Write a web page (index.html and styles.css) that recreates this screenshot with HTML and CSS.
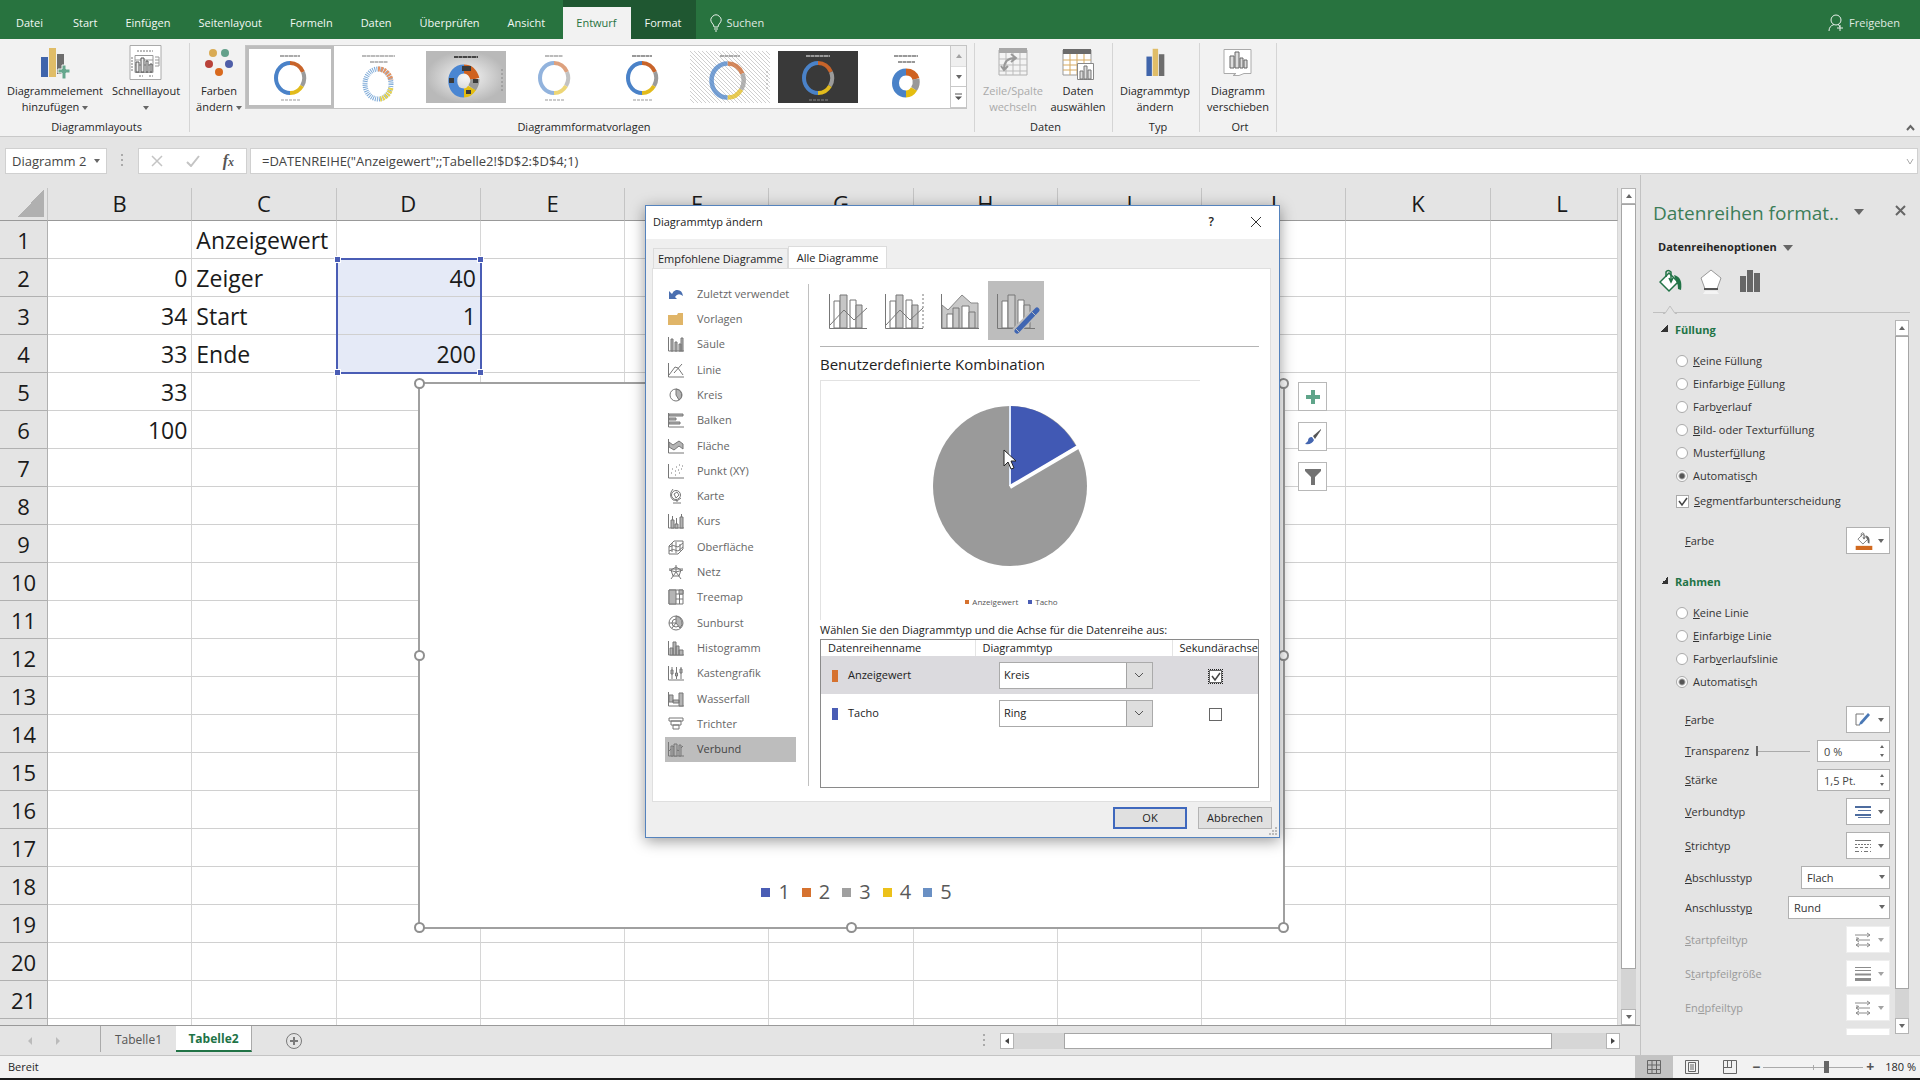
FILE: index.html
```html
<!DOCTYPE html>
<html lang="de">
<head>
<meta charset="utf-8">
<title>Diagrammtyp ändern</title>
<link rel="stylesheet" href="styles.css">
</head>
<body>
<svg class="defs" aria-hidden="true">
  <symbol id="ring" viewBox="0 0 36 36">
    <g fill="none" stroke-width="4">
      <path d="M18 3A14 15 0 0 1 31 12" stroke="#c8642a"/>
      <path d="M31 12A14 15 0 0 1 30 26" stroke="#9b9b9b"/>
      <path d="M30 26A14 15 0 0 1 18 33" stroke="#e2bb1c"/>
      <path d="M18 33A14 15 0 0 1 18 3" stroke="#4a82c8"/>
    </g>
  </symbol>
  <symbol id="bars3" viewBox="0 0 24 36">
    <path d="M1 11h7v25H1z" fill="#4065ab"/><path d="M9 1h7v35H9z" fill="#e0bd68"/><path d="M17 8h7v28h-7z" fill="#6d6d6d"/>
  </symbol>
  <symbol id="bucket" viewBox="0 0 24 24">
    <path d="M10 4l9 9-9 9-9-9z" fill="#fff" stroke="currentColor" stroke-width="1.500"/>
    <path d="M7 8V3q2-3 5 0v9M10 9l2 4 2-4" fill="none" stroke="currentColor" stroke-width="1.500"/>
    <path d="M15 6q9 2 7 15l-3-1q0-5-2-8z" fill="currentColor"/>
  </symbol>
  <symbol id="arrows" viewBox="0 0 16 16">
    <path d="M0 3h15M12 1l3 2-3 2M1 8h14M4 6L1 8l3 2M1 13h14M4 11l-3 2 3 2M12 11l3 2-3 2M2 8V5" fill="none" stroke="#8c8c8c"/>
  </symbol>
  <symbol id="combo" viewBox="0 0 40 36">
    <path d="M6 8h6v27H6zM22 7h6v28h-6z" fill="#fff" stroke="#777"/>
    <path d="M12 2h7v33h-7zM28 12h6v23h-6z" fill="#c6c6c6" stroke="#777"/>
    <path d="M1.500 1v34.500H39" fill="none" stroke="#777"/>
  </symbol>
</svg>

<header class="tabs">
  <nav class="tab-list">
    <button>Datei</button><button>Start</button><button>Einfügen</button><button>Seitenlayout</button><button>Formeln</button><button>Daten</button><button>Überprüfen</button><button>Ansicht</button>
    <div class="context"><button class="active">Entwurf</button><button>Format</button></div>
    <button class="search"><svg width="12" height="18" viewBox="0 0 12 18" fill="none" stroke="#fff"><path d="M4 13Q4 11 2 9A5 5 0 1 1 10 9Q8 11 8 13zM4 15h4M5 17h2"/></svg>Suchen</button>
  </nav>
  <button class="share"><svg width="16" height="18" viewBox="0 0 16 18" fill="none" stroke="#fff"><circle cx="8" cy="6" r="5"/><path d="M1 17Q1 12 6 10.500M10 10l2 3M9 14h6M12 11v6"/></svg>Freigeben</button>
</header>

<section class="ribbon">
  <div class="group g-layout">
    <div class="tools">
      <button class="tool w104"><svg width="30" height="36" viewBox="0 0 30 36"><path d="M1 12h7v20H1z" fill="#4065ab"/><path d="M9 3h7v29H9z" fill="#e0bd68"/><path d="M17 9h7v20h-7z" fill="#6d6d6d"/><path d="M18 24h4v-4h4v4h4v4h-4v6h-4v-6h-4z" fill="#66a78d" stroke="#f2f2f2"/></svg><span>Diagrammelement<br>hinzufügen <i class="caret"></i></span></button>
      <button class="tool w78"><svg width="34" height="36" viewBox="0 0 34 36"><path d="M1 .5h31v34H1z" fill="#fff" stroke="#aaa"/><path d="M8 6h16M10 31h4M20 31h4M3 12v14" stroke="#777" stroke-dasharray="2 1"/><path d="M6 10.500h18v17H6zM26 12h4v9h-4M26 15h4M26 18h4M6 15h18M6 20h18" fill="none" stroke="#999"/><path d="M7 17h3v10H7zM12 13h3v14h-3zM17 16h2v11h-2zM21 19h2v8h-2z" fill="#eee" stroke="#555"/></svg><span>Schnelllayout<br><i class="caret"></i></span></button>
    </div>
    <p>Diagrammlayouts</p>
  </div>
  <div class="group g-styles">
    <div class="tools">
      <button class="tool w52"><svg width="30" height="36" viewBox="0 0 30 36"><circle cx="9" cy="8" r="4" fill="#d9ab54"/><circle cx="21" cy="8" r="4" fill="#64a18b"/><circle cx="5" cy="19" r="4" fill="#b9423a"/><circle cx="25" cy="19" r="4" fill="#4f5ea8"/><circle cx="15" cy="27" r="4" fill="#d96a1e"/></svg><span>Farben<br>ändern <i class="caret"></i></span></button>
      <div class="gallery">
        <button class="style selected" aria-label="Formatvorlage 1"><svg viewBox="0 0 80 52"><path d="M30 5h20" stroke="#aaa" stroke-width="2" stroke-dasharray="4 .5"/><use href="#ring" x="22" y="9" width="36" height="36"/><path d="M31 49h20" stroke="#ccc" stroke-width="2" stroke-dasharray="3 1"/></svg></button>
        <button class="style" aria-label="Formatvorlage 2"><svg viewBox="0 0 80 52"><path d="M24 5h33M32 11h18" stroke="#bbb" stroke-width="2" stroke-dasharray="4 .5"/><ellipse cx="40" cy="33" rx="13" ry="15" fill="none" stroke="#7fabd8" stroke-width="5" stroke-dasharray="1 1"/><path d="M40 18a13 15 0 0 1 13 11" fill="none" stroke="#e59361" stroke-width="5" stroke-dasharray="2 1"/><path d="M53 37a13 15 0 0 1-11 11" fill="none" stroke="#e8d34d" stroke-width="5" stroke-dasharray="2 1"/></svg></button>
        <button class="style" aria-label="Formatvorlage 3"><svg viewBox="0 0 80 52"><defs><radialGradient id="gr"><stop offset="0" stop-color="#f6f6f6"/><stop offset="1" stop-color="#b9b9b9"/></radialGradient></defs><path d="M0 0h80v52H0z" fill="url(#gr)"/><path d="M28 6h24" stroke="#444" stroke-width="2" stroke-dasharray="4 .5"/><g fill="none" stroke-width="9"><path d="M38 18q8 0 11 10" stroke="#cf6220"/><path d="M49 28q0 5-3 9" stroke="#999"/><path d="M46 37q-3 5-8 5" stroke="#e4bd10"/><path d="M38 42C23 42 23 18 38 18" stroke="#4a86d2"/></g><path d="M23 27h5v5h-5zM36 15h9v5h-9zM47 28h5v4h-5zM40 39h5v4h-5z" fill="#3b3b3b"/><path d="M76 18v22" stroke="#888" stroke-dasharray="2 2"/></svg></button>
        <button class="style" aria-label="Formatvorlage 4"><svg viewBox="0 0 80 52"><path d="M31 5h18" stroke="#bbb" stroke-width="2" stroke-dasharray="4 .5"/><use href="#ring" x="22" y="9" width="36" height="36" opacity=".6"/><path d="M31 49h20" stroke="#ccc" stroke-width="2" stroke-dasharray="3 1"/></svg></button>
        <button class="style" aria-label="Formatvorlage 5"><svg viewBox="0 0 80 52"><path d="M30 5h20" stroke="#999" stroke-width="2" stroke-dasharray="4 .5"/><use href="#ring" x="22" y="9" width="36" height="36"/><path d="M31 49h20" stroke="#ccc" stroke-width="2" stroke-dasharray="3 1"/></svg></button>
        <button class="style" aria-label="Formatvorlage 6"><svg viewBox="0 0 80 52"><defs><pattern id="hatch" width="4" height="4" patternUnits="userSpaceOnUse"><path d="M0 0l4 4" stroke="#cfcfcf"/></pattern></defs><path d="M0 0h80v52H0z" fill="url(#hatch)"/><path d="M30 5h20" stroke="#aaa" stroke-width="2" stroke-dasharray="4 .5"/><use href="#ring" x="17" y="9" width="41" height="41" opacity=".75"/><path d="M77 20v20" stroke="#aaa" stroke-dasharray="2 2"/></svg></button>
        <button class="style" aria-label="Formatvorlage 7"><svg viewBox="0 0 80 52"><path d="M0 0h80v52H0z" fill="#393939"/><path d="M28 5h24" stroke="#999" stroke-width="2" stroke-dasharray="4 .5"/><use href="#ring" x="22" y="9" width="36" height="36"/><path d="M31 49h20" stroke="#888" stroke-dasharray="3 1"/></svg></button>
        <button class="style" aria-label="Formatvorlage 8"><svg viewBox="0 0 80 52"><path d="M28 5h24M32 11h17" stroke="#999" stroke-width="2" stroke-dasharray="4 .5"/><g fill="none" stroke-width="7"><path d="M40 21q8 0 10 7" stroke="#cf6220"/><path d="M50 28q1 6-2 10" stroke="#999"/><path d="M48 38q-3 5-8 5" stroke="#e4bd10"/><path d="M40 43C26 43 26 21 40 21" stroke="#4a82c8"/></g></svg></button>
        <div class="gallery-nav"><button class="off" aria-label="Nach oben"><i class="up"></i></button><button aria-label="Nach unten"><i class="caret"></i></button><button aria-label="Mehr"><svg width="7" height="8" viewBox="0 0 7 8"><path d="M0 1h7" stroke="#555"/><path d="M0 3.500h7L3.500 7z" fill="#555"/></svg></button></div>
      </div>
    </div>
    <p>Diagrammformatvorlagen</p>
  </div>
  <div class="group g-data">
    <div class="tools">
      <button class="tool w68" disabled><svg width="30" height="36" viewBox="0 0 30 36"><path d="M1 5h28v25H1z" fill="#f4f4f4" stroke="#b0b0b0"/><path d="M1 3h28v5H1z" fill="#a8a8a8"/><path d="M1 14h28M1 20h28M1 26h28M8 8v22M15 8v22M22 8v22" stroke="#bbb"/><path d="M6 24Q6 13 17 13M13 9l5 4-5 4M3 21l3 4 4-4" fill="none" stroke="#999" stroke-width="2"/></svg><span>Zeile/Spalte<br>wechseln</span></button>
      <button class="tool w60"><svg width="32" height="36" viewBox="0 0 32 36"><path d="M1 5h28v25H1z" fill="#fff" stroke="#999"/><path d="M1 4h28v5H1z" fill="#6b6b6b"/><path d="M1 15h28M1 20h28M1 25h28M8 9v21M15 9v21M22 9v21" stroke="#d6a95e"/><path d="M15.500 18.500h16v16h-16z" fill="#fff" stroke="#888"/><path d="M18 26h3v8h-3zM22 21h3v13h-3zM26 25h3v9h-3z" fill="#ddd" stroke="#777"/></svg><span>Daten<br>auswählen</span></button>
    </div>
    <p>Daten</p>
  </div>
  <div class="group g-type">
    <div class="tools"><button class="tool w78"><svg width="24" height="36" viewBox="0 0 24 36"><use href="#bars3" width="24" height="28" y="3"/></svg><span>Diagrammtyp<br>ändern</span></button></div>
    <p>Typ</p>
  </div>
  <div class="group g-place">
    <div class="tools"><button class="tool w68"><svg width="30" height="36" viewBox="0 0 30 36"><path d="M1 4.500h27v24H21l-5 2h-6l3-2H1z" fill="#fff" stroke="#aaa"/><path d="M7 11h4v12H7zM12 7h4v16h-4zM17 13h3v10h-3zM21 15h3v8h-3z" fill="#ddd" stroke="#666"/></svg><span>Diagramm<br>verschieben</span></button></div>
    <p>Ort</p>
  </div>
  <button class="collapse" aria-label="Menüband reduzieren"><svg width="9" height="7" viewBox="0 0 9 7"><path d="M1 6l3.500-4L8 6" fill="none" stroke="#666" stroke-width="2"/></svg></button>
</section>

<div class="formula-bar">
  <div class="name-box"><input value="Diagramm 2" aria-label="Namenfeld"><i class="caret"></i></div>
  <span class="dots"></span>
  <div class="fx-box">
    <svg width="12" height="12" viewBox="0 0 12 12"><path d="M1 1l10 10M11 1L1 11" stroke="#c4c4c4" stroke-width="1.500"/></svg>
    <svg width="14" height="12" viewBox="0 0 14 12"><path d="M1 7l4 4 8-10" fill="none" stroke="#c4c4c4" stroke-width="2"/></svg>
    <button class="fx">f<small>x</small></button>
  </div>
  <div class="formula"><input value="=DATENREIHE(&quot;Anzeigewert&quot;;;Tabelle2!$D$2:$D$4;1)" aria-label="Formel"><svg width="8" height="7" viewBox="0 0 8 7"><path d="M1 1l3 5 3-5" fill="none" stroke="#aaa"/></svg></div>
</div>

<main class="workspace">
  <section class="book">
    <div class="sheet-area">
      <div class="sheet">
        <table class="grid">
          <colgroup><col class="c-row"><col span="10" class="c-col"><col class="c-last"></colgroup>
          <thead><tr><th><i class="all"></i></th><th>B</th><th>C</th><th>D</th><th>E</th><th>F</th><th>G</th><th>H</th><th>I</th><th>J</th><th>K</th><th>L</th></tr></thead>
          <tbody>
          <tr><th>1 <td> <td>Anzeigewert <td> <td><td><td><td> <td><td><td><td>
          <tr><th>2 <td class="n">0 <td>Zeiger <td class="n s">40 <td><td><td><td> <td><td><td><td>
          <tr><th>3 <td class="n">34 <td>Start <td class="n s">1 <td><td><td><td> <td><td><td><td>
          <tr><th>4 <td class="n">33 <td>Ende <td class="n s">200 <td><td><td><td> <td><td><td><td>
          <tr><th>5 <td class="n">33 <td><td> <td><td><td><td> <td><td><td><td>
          <tr><th>6 <td class="n">100 <td><td> <td><td><td><td> <td><td><td><td>
          <tr><th>7 <td><td><td> <td><td><td><td> <td><td><td><td>
          <tr><th>8 <td><td><td> <td><td><td><td> <td><td><td><td>
          <tr><th>9 <td><td><td> <td><td><td><td> <td><td><td><td>
          <tr><th>10 <td><td><td> <td><td><td><td> <td><td><td><td>
          <tr><th>11 <td><td><td> <td><td><td><td> <td><td><td><td>
          <tr><th>12 <td><td><td> <td><td><td><td> <td><td><td><td>
          <tr><th>13 <td><td><td> <td><td><td><td> <td><td><td><td>
          <tr><th>14 <td><td><td> <td><td><td><td> <td><td><td><td>
          <tr><th>15 <td><td><td> <td><td><td><td> <td><td><td><td>
          <tr><th>16 <td><td><td> <td><td><td><td> <td><td><td><td>
          <tr><th>17 <td><td><td> <td><td><td><td> <td><td><td><td>
          <tr><th>18 <td><td><td> <td><td><td><td> <td><td><td><td>
          <tr><th>19 <td><td><td> <td><td><td><td> <td><td><td><td>
          <tr><th>20 <td><td><td> <td><td><td><td> <td><td><td><td>
          <tr><th>21 <td><td><td> <td><td><td><td> <td><td><td><td>
          <tr><th> <td><td><td> <td><td><td><td> <td><td><td><td>
          </tbody>
        </table>
        <div class="range"><i></i><i></i><i></i><i></i></div>
        <div class="chart">
          <i class="h tl"></i><i class="h tr"></i><i class="h ml"></i><i class="h mr"></i><i class="h bl"></i><i class="h bm"></i><i class="h br"></i>
          <ul class="legend"><li class="k1">1</li><li class="k2">2</li><li class="k3">3</li><li class="k4">4</li><li class="k5">5</li></ul>
          <div class="chart-tools">
            <button aria-label="Diagrammelemente"><svg width="16" height="16" viewBox="0 0 16 16"><path d="M6 1h4v5h5v4h-5v5H6v-5H1V6h5z" fill="#5fa58a"/></svg></button>
            <button aria-label="Diagrammformatvorlagen"><svg width="18" height="18" viewBox="0 0 18 18"><path d="M17 1L9 8l2 3 6-9z" fill="#555"/><path d="M8 9q-4 0-4 4l-3 3q7 1 9-4z" fill="#4466b0"/></svg></button>
            <button aria-label="Diagrammfilter"><svg width="18" height="18" viewBox="0 0 18 18"><path d="M1 1h16v2l-6 6v8H7V9L1 3z" fill="#737373"/></svg></button>
          </div>
        </div>
      </div>
      <div class="vscroll"><button aria-label="Nach oben"><i class="up"></i></button><span class="thumb"></span><span class="track"></span><button aria-label="Nach unten"><i class="caret"></i></button></div>
    </div>
    <div class="sheet-tabs">
      <span class="prev"></span><span class="next"></span>
      <button class="stab first">Tabelle1</button><button class="stab current">Tabelle2</button>
      <button class="add" aria-label="Neues Blatt"><svg width="18" height="18" viewBox="0 0 18 18" fill="none" stroke="#7a7a7a"><circle cx="9" cy="9" r="7.500"/><path d="M9 5v8M5 9h8" stroke-width="2"/></svg></button>
      <span class="dots"></span>
      <div class="hscroll"><button aria-label="Nach links"><i class="left"></i></button><span class="t1"></span><span class="thumb"></span><span class="t2"></span><button aria-label="Nach rechts"><i class="right"></i></button></div>
    </div>
  </section>

  <aside class="pane">
    <div class="pane-head"><h2>Datenreihen format..</h2><i class="caret big"></i><button aria-label="Schließen"><svg width="11" height="11" viewBox="0 0 11 11"><path d="M1 1l9 9M10 1l-9 9" stroke="#666" stroke-width="2"/></svg></button></div>
    <button class="pane-sub">Datenreihenoptionen <i class="caret big"></i></button>
    <div class="pane-icons">
      <svg class="green" width="24" height="24"><use href="#bucket"/></svg>
      <svg width="24" height="26" viewBox="0 0 24 26"><path d="M12 1l10 8-4 11H6L2 9z" fill="#fff" stroke="#999"/><path d="M5 20h14" stroke="#555" stroke-width="2"/><path d="M6 22h12l2 3H4z" fill="#f4f4f4"/></svg>
      <svg width="22" height="24" viewBox="0 0 22 24"><path d="M1 7h6v16H1zM8 1h6v22H8zM15 4h6v19h-6z" fill="#666"/></svg>
    </div>
    <svg class="notch" width="14" height="9" viewBox="0 0 14 9"><path d="M0 8.500h2L7 1l5 7.500h2" fill="#e4e4e4" stroke="#c0c0c0"/></svg>
    <div class="pane-body">
      <form class="fields">
        <h3>Füllung</h3>
        <div class="radios">
          <label><input type="radio" name="f"><span><u>K</u>eine Füllung</span></label>
          <label><input type="radio" name="f"><span>Einfarbige <u>F</u>üllung</span></label>
          <label><input type="radio" name="f"><span>Farb<u>v</u>erlauf</span></label>
          <label><input type="radio" name="f"><span><u>B</u>ild- oder Texturfüllung</span></label>
          <label><input type="radio" name="f"><span>Musterf<u>ü</u>llung</span></label>
          <label><input type="radio" name="f" checked><span>Automatis<u>c</u>h</span></label>
          <label class="chk"><input type="checkbox" checked><span><u>S</u>egmentfarbunterscheidung</span></label>
        </div>
        <div class="field solo"><span><u>F</u>arbe</span><button type="button" class="pick" aria-label="Farbe"><svg width="18" height="18" viewBox="0 0 24 26" color="#666"><use href="#bucket" width="22" height="19" x="1"/><path d="M0 20h24v6H0z" fill="#d1691f"/></svg><i class="caret"></i></button></div>
        <h3>Rahmen</h3>
        <div class="radios">
          <label><input type="radio" name="r"><span><u>K</u>eine Linie</span></label>
          <label><input type="radio" name="r"><span><u>E</u>infarbige Linie</span></label>
          <label><input type="radio" name="r"><span>Farb<u>v</u>erlaufslinie</span></label>
          <label><input type="radio" name="r" checked><span>Automatis<u>c</u>h</span></label>
        </div>
        <div class="stack">
          <div class="field"><span><u>F</u>arbe</span><button type="button" class="pick" aria-label="Linienfarbe"><svg width="16" height="16" viewBox="0 0 16 16"><path d="M9 2H1v11h4" fill="none" stroke="#777"/><path d="M13 1l2 2-8 9-3 1 1-3z" fill="#4a78b5"/></svg><i class="caret"></i></button></div>
          <div class="field"><label for="tr"><u>T</u>ransparenz</label><input type="range" value="0" aria-label="Transparenz"><span class="spin"><input id="tr" value="0 %"></span></div>
          <div class="field"><label for="st"><u>S</u>tärke</label><span class="spin"><input id="st" value="1,5 Pt."></span></div>
          <div class="field"><span><u>V</u>erbundtyp</span><button type="button" class="pick" aria-label="Verbundtyp"><svg width="16" height="16" viewBox="0 0 16 16"><path d="M0 3h16M0 11h16" stroke="#4d6c9f" stroke-width="2"/><path d="M3 6.500h13M3 13.500h13" stroke="#5b77a6"/></svg><i class="caret"></i></button></div>
          <div class="field"><span><u>S</u>trichtyp</span><button type="button" class="pick" aria-label="Strichtyp"><svg width="16" height="16" viewBox="0 0 16 16" stroke="#777"><path d="M0 2.500h16"/><path d="M0 6.500h16" stroke-dasharray="2 1"/><path d="M0 9.500h16" stroke-dasharray="3 2"/><path d="M0 13.500h16" stroke-dasharray="4 2 1 2"/></svg><i class="caret"></i></button></div>
          <div class="field"><label for="ab"><u>A</u>bschlusstyp</label><span class="sel w90"><select id="ab"><option>Flach</option></select></span></div>
          <div class="field"><label for="an">Anschlussty<u>p</u></label><span class="sel w102"><select id="an"><option>Rund</option></select></span></div>
          <div class="field off"><span><u>S</u>tartpfeiltyp</span><button type="button" class="pick" disabled aria-label="Startpfeiltyp"><svg width="16" height="18"><use href="#arrows"/></svg><i class="caret"></i></button></div>
          <div class="field off"><span>S<u>t</u>artpfeilgröße</span><button type="button" class="pick" disabled aria-label="Startpfeilgröße"><svg width="16" height="16" viewBox="0 0 16 16" stroke="#8c8c8c"><path d="M0 1.500h16M0 4.500h16"/><path d="M0 8.500h16" stroke-width="2"/><path d="M0 13.500h16" stroke-width="3"/></svg><i class="caret"></i></button></div>
          <div class="field off"><span>En<u>d</u>pfeiltyp</span><button type="button" class="pick" disabled aria-label="Endpfeiltyp"><svg width="16" height="18"><use href="#arrows"/></svg><i class="caret"></i></button></div>
          <div class="field off"><span></span><button type="button" class="pick" disabled aria-label="Endpfeilgröße"><svg width="16" height="16" viewBox="0 0 16 16" stroke="#8c8c8c"><path d="M0 1.500h16"/></svg></button></div>
        </div>
      </form>
      <div class="vscroll slim"><button aria-label="Nach oben"><i class="up"></i></button><span class="thumb"></span><span class="track"></span><button aria-label="Nach unten"><i class="caret"></i></button></div>
    </div>
  </aside>
</main>

<footer class="status">
  <span>Bereit</span>
  <div class="views">
    <button class="on" aria-label="Normal"><svg width="14" height="14" viewBox="0 0 14 14" fill="none" stroke="#666"><path d="M.5.5h13v13H.5zM5 0v14M9.500 0v14M0 5h14M0 9.500h14"/></svg></button>
    <button aria-label="Seitenlayout"><svg width="14" height="14" viewBox="0 0 14 14" fill="none" stroke="#666"><path d="M.5.5h13v13H.5zM3.500 2.500h7v9h-7zM5 5h4M5 7h4M5 9h4"/></svg></button>
    <button aria-label="Umbruchvorschau"><svg width="14" height="14" viewBox="0 0 14 14" fill="none" stroke="#666"><path d="M.5.5h13v13H.5zM4.500 0v7M8.500 0v7M0 7.500h9"/></svg></button>
  </div>
  <button class="zoom-btn">−</button><input class="zoom-range" type="range" value="64" aria-label="Zoom"><button class="zoom-btn">+</button><span class="pct">180 %</span>
</footer>

<div class="dialog" role="dialog" aria-label="Diagrammtyp ändern">
  <div class="title"><span>Diagrammtyp ändern</span><button>?</button><button aria-label="Schließen"><svg width="12" height="12" viewBox="0 0 12 12"><path d="M1 1l10 10M11 1L1 11" stroke="#333"/></svg></button></div>
  <div class="dtabs"><button>Empfohlene Diagramme</button><button class="active">Alle Diagramme</button></div>
  <div class="page">
    <nav class="types">
      <button><svg viewBox="0 0 16 16"><path d="M1 5v8h8L7 11q3-5 8-1-1-7-7-6-3 1-4 4z" fill="#4a6fb0"/></svg>Zuletzt verwendet</button>
      <button><svg viewBox="0 0 16 16"><path d="M0 4h9l1-2h5v12H0z" fill="#e0b568"/></svg>Vorlagen</button>
      <button><svg viewBox="0 0 16 16"><path d="M.5 1v14H16"/><path d="M3 3h2v12H3zM7 6h2v9H7zM11 8h2v7h-2zM13 2h2v13h-2z" class="f"/></svg>Säule</button>
      <button><svg viewBox="0 0 16 16"><path d="M.5 1v14H16M1 13l6-8 3 1 5 7M6 11l8-9"/></svg>Linie</button>
      <button><svg viewBox="0 0 16 16"><circle cx="8" cy="8" r="6"/><path d="M8 2a6 6 0 0 1 3 11L8 8z" class="f"/></svg>Kreis</button>
      <button><svg viewBox="0 0 16 16"><path d="M.5 1v14H16"/><path d="M1 2h14v2H1zM1 6h7v2H1zM1 10h11v2H1z" class="f"/></svg>Balken</button>
      <button><svg viewBox="0 0 16 16"><path d="M.5 1v14H16"/><path d="M1 4l4 3 6-4 4 3v5l-4-3-5 4-5-3z" class="f"/></svg>Fläche</button>
      <button><svg viewBox="0 0 16 16"><path d="M.5 1v14H16"/><path d="M3 10h1M4 6h1M7 8h1M8 4h1M11 2h1M11 10h1M13 6h1M7 12h1M14 3h1M10 7h1"/></svg>Punkt (XY)</button>
      <button><svg viewBox="0 0 16 16"><circle cx="8" cy="7" r="4.500"/><path d="M5 1Q0 7 5 12q5 2 8-2M9 12v2M5 15h8M6 6l3-2 2 3-3 3z" class="n"/></svg>Karte</button>
      <button><svg viewBox="0 0 16 16"><path d="M.5 1v14H16M4.500 3v12M8.500 5v10M13.500 1v14"/><path d="M3 7h3v8H3zM7 11h3v4H7zM12 4h3v11h-3z" class="f"/></svg>Kurs</button>
      <button><svg viewBox="0 0 16 16"><path d="M1 7l5-5h9v8l-5 5H1zM1 8q4-3 9 0l5-4M1 12q4-3 9 0l5-4M4 4v9M8 3v11M12 5v7"/></svg>Oberfläche</button>
      <button><svg viewBox="0 0 16 16"><path d="M8 1v7L1 6M15 6L8 8l5 7M3 15l5-7M8 3l5 3-2 6H5L3 6zM1 5h14"/></svg>Netz</button>
      <button><svg viewBox="0 0 16 16"><path d="M1 1h14v14H1zM8 5h7M11.500 5v10M8 10h7"/><path d="M1 1h7v14H1zM11 1h4v4h-4z" class="f"/></svg>Treemap</button>
      <button><svg viewBox="0 0 16 16"><circle cx="8" cy="8" r="7"/><circle cx="8" cy="8" r="4"/><path d="M8 8V1a7 7 0 0 1 4 12z" class="f"/><path d="M1 8h7M4 13l4-5"/></svg>Sunburst</button>
      <button><svg viewBox="0 0 16 16"><path d="M.5 1v14H16"/><path d="M2 8h3v7H2zM5 2h3v13H5zM8 6h3v9H8zM11 10h4v5h-4z" class="f"/></svg>Histogramm</button>
      <button><svg viewBox="0 0 16 16"><path d="M.5 1v14H16M4 2v12M8.500 2v12M13 2v12"/><path d="M3 5h2v4H3zM7.500 8h2v3h-2zM12 4h2v4h-2z" class="f"/></svg>Kastengrafik</button>
      <button><svg viewBox="0 0 16 16"><path d="M.5 1v14H16"/><path d="M1 4h4v7H1zM5 9h6v3H5zM11 2h4v13h-4z" class="f"/></svg>Wasserfall</button>
      <button><svg viewBox="0 0 16 16"><path d="M1 2h14v3H1zM3 5h10v4H3zM5 9h6v4H5z"/></svg>Trichter</button>
      <button class="on"><svg viewBox="0 0 16 16"><path d="M.5 1v14H16M1 10l5-5 4 5 5-5"/><path d="M3 5h2v10H3zM6 3h3v12H6zM11 4h2v11h-2z" class="f"/></svg>Verbund</button>
    </nav>
    <div class="config">
      <div class="variants">
        <button aria-label="Säulen und Linie"><svg viewBox="0 0 40 36"><use href="#combo"/><path d="M2 32l14-15 10 10 13-12" fill="none" stroke="#777"/></svg></button>
        <button aria-label="Säulen und Linie auf Sekundärachse"><svg viewBox="0 0 40 36"><use href="#combo"/><path d="M2 32l14-15 10 10 13-12" fill="none" stroke="#777"/><path d="M39 1v34" stroke="#777" stroke-dasharray="2 2"/></svg></button>
        <button aria-label="Gestapelte Fläche und Säulen"><svg viewBox="0 0 40 36"><path d="M2 12l6 5L22 2l9 8h7v25H2z" fill="#c9c9c9" stroke="#888"/><path d="M7 21h6v14H7zM22 13h7v22h-7z" fill="#fff" stroke="#777"/><path d="M13 15h6v20h-6zM29 19h6v16h-6z" fill="#c6c6c6" stroke="#777"/><path d="M1.500 1v34.500H39" fill="none" stroke="#777"/></svg></button>
        <button class="on" aria-label="Benutzerdefiniert"><svg viewBox="0 0 40 36"><use href="#combo"/><path d="M41 17L19 39" stroke="#bdbdbd" stroke-width="8"/><path d="M41 17L21 38" stroke="#4066b2" stroke-width="5" stroke-linecap="round"/><path d="M36 19l4 4M20 36l3 3" stroke="#bdbdbd"/></svg></button>
      </div>
      <h2>Benutzerdefinierte Kombination</h2>
      <div class="preview">
        <svg class="pie" width="156" height="164" viewBox="0 0 156 164"><ellipse cx="78" cy="82" rx="77" ry="80" fill="#9a9a9a"/><path d="M78 82V2A77 80 0 0 1 144 42z" fill="#4159b4"/><path d="M78 2v80" stroke="#dfe9fa" stroke-width="2"/><path d="M78 83l68-40" stroke="#fff" stroke-width="4"/></svg>
        <ul><li class="k2">Anzeigewert</li><li class="k1">Tacho</li></ul>
      </div>
      <p>Wählen Sie den Diagrammtyp und die Achse für die Datenreihe aus:</p>
      <div class="series">
        <table>
          <colgroup><col class="s1"><col class="s2"><col></colgroup>
          <tr><th>Datenreihenname</th><th>Diagrammtyp</th><th>Sekundärachse</th></tr>
          <tr class="hot"><td><i class="sw o"></i>Anzeigewert</td><td><span class="dsel"><select aria-label="Diagrammtyp Anzeigewert"><option>Kreis</option></select><svg width="10" height="7" viewBox="0 0 10 7"><path d="M1 1l4 4 4-4" fill="none" stroke="#555"/></svg></span></td><td><input class="focus" type="checkbox" checked aria-label="Sekundärachse Anzeigewert"></td></tr>
          <tr><td><i class="sw b"></i>Tacho</td><td><span class="dsel"><select aria-label="Diagrammtyp Tacho"><option>Ring</option></select><svg width="10" height="7" viewBox="0 0 10 7"><path d="M1 1l4 4 4-4" fill="none" stroke="#555"/></svg></span></td><td><input type="checkbox" aria-label="Sekundärachse Tacho"></td></tr>
        </table>
      </div>
    </div>
  </div>
  <div class="actions"><button class="ok">OK</button><button>Abbrechen</button></div>
  <svg class="grip" width="8" height="8" viewBox="0 0 8 8"><path d="M6 0h2v2H6zM3 3h2v2H3zM6 3h2v2H6zM0 6h2v2H0zM3 6h2v2H3zM6 6h2v2H6z" fill="#bbb"/></svg>
  <svg class="cursor" width="14" height="21" viewBox="0 0 14 21"><path d="M1 1v16l4-4 3 7 3-1-3-7h5z" fill="#fff" stroke="#222"/></svg>
</div>
</body>
</html>
```
FILE: styles.css
```css
* { box-sizing: border-box; }
body {
  margin: 0;
  height: 100vh;
  display: flex;
  flex-direction: column;
  overflow: hidden;
  background: #e4e4e4;
  color: #262626;
  font: 12px/16px "Open Sans", "Noto Sans", sans-serif;
}
button, input, select { font: inherit; color: inherit; margin: 0; }
button { background: none; border: 0; padding: 0; }
h2, h3, p, ul { margin: 0; padding: 0; font-weight: 400; }
ul { list-style: none; }
.defs { position: absolute; width: 0; height: 0; }

.caret, .up, .left, .right { display: inline-block; width: 0; height: 0; border: 3px solid transparent; }
.caret { border-top: 4px solid #666; border-bottom: 0; vertical-align: middle; }
.up { border-bottom: 4px solid #666; border-top: 0; }
.left { border-right: 4px solid #444; border-left: 0; }
.right { border-left: 4px solid #444; border-right: 0; }
.caret.big { border-width: 6px 5px 0; }
.dots { width: 2px; height: 14px; background: repeating-linear-gradient(#aaa 0 2px, transparent 2px 5px); }

/* Menüband-Register */
.tabs { display: flex; justify-content: space-between; height: 39px; background: #28733f; color: #f2f8f4; flex: none; font-size: 11px; }
.tab-list { display: flex; padding-left: 2px; }
.tab-list button { padding: 7px 14px 0; }
.tab-list > button:first-child { padding-right: 16px; }
.context { display: flex; background: #1f5731; margin-left: 4px; }
.context button { padding: 7px 14px 0 13px; }
.context .active { margin-top: 7px; padding-top: 0; background: #f2f2f2; color: #28733f; }
.context button:last-child { padding-left: 14px; }
.tab-list .search, .share { display: flex; align-items: center; gap: 5px; padding-top: 7px; opacity: .9; }
.share { padding-right: 20px; }

/* Menüband */
.ribbon { position: relative; display: flex; height: 98px; flex: none; background: #f2f2f2; border-bottom: 1px solid #c9c9c9; font-size: 11px; }
.group { display: flex; flex-direction: column; justify-content: space-between; padding: 6px 0 1px 3px; position: relative; }
.group::after { content: ""; position: absolute; right: 0; top: 4px; bottom: 4px; border-right: 1px solid #d5d5d5; }
.group p { text-align: center; }
.tools { display: flex; align-items: flex-start; }
.tool { display: flex; flex-direction: column; align-items: center; gap: 2px; white-space: nowrap; }
.tool:disabled { color: #aaa; }
.g-layout { width: 190px; }
.g-styles { width: 785px; }
.g-data { width: 138px; }
.g-type { width: 87px; }
.g-place { width: 77px; }
.w52 { width: 52px; }
.w60 { width: 60px; }
.w68 { width: 70px; }
.w78 { width: 78px; }
.w104 { width: 104px; }
.gallery { display: flex; height: 64px; background: #fff; border: 1px solid #c4c4c4; }
.style { width: 88px; padding: 5px 4px; }
.style svg { display: block; width: 80px; height: 52px; }
.style.selected { padding: 2px 1px; border: 3px solid #bdbdbd; }
.gallery-nav { display: flex; flex-direction: column; width: 16px; border-left: 1px solid #c9c9c9; }
.gallery-nav button { flex: 1; border-bottom: 1px solid #c9c9c9; display: grid; place-items: center; }
.gallery-nav .off { background: #e6e6e6; opacity: .6; }
.collapse { margin: auto 5px 1px auto; }

/* Bearbeitungsleiste */
.formula-bar { display: flex; align-items: center; height: 38px; padding: 11px 2px 1px 5px; flex: none; font-size: 13px; }
.formula-bar input { border: 0; background: none; outline: 0; padding: 0; min-width: 0; flex: 1; color: #444; }
.name-box, .fx-box, .formula { display: flex; align-items: center; height: 26px; background: #fff; border: 1px solid #d0d0d0; }
.name-box { width: 102px; padding: 0 6px; }
.formula-bar .dots { margin: 0 15px 0 14px; }
.fx-box { width: 109px; justify-content: space-between; padding: 0 12px; margin-right: 3px; }
.fx { font: italic bold 16px/20px "Liberation Serif", serif; color: #555; }
.fx small { font-size: 12px; }
.formula { flex: 1; padding: 0 3px 0 11px; }

/* Tabellenblatt */
.workspace { flex: 1; min-height: 0; display: grid; grid-template-columns: minmax(0, 1fr) 280px; }
.book { display: flex; flex-direction: column; min-height: 0; }
.sheet-area { flex: 1; min-height: 0; display: grid; grid-template-columns: minmax(0, 1fr) 22px; border-bottom: 1px solid #999; }
.sheet { position: relative; overflow: hidden; padding-top: 13px; }
.grid { width: 100%; table-layout: fixed; border-collapse: separate; border-spacing: 0; background: #fff; font-size: 22px; line-height: 30px; color: #1a1a1a; }
.c-row { width: 48px; }
.c-col { width: 144px; }
.c-last { width: 127px; }
.grid th, .grid td { height: 38px; padding: 0 4px; border-right: 1px solid #d6d6d6; border-bottom: 1px solid #d0d0d0; text-align: left; font-weight: 400; overflow: hidden; white-space: nowrap; }
.grid td { font-size: 23px; }
.grid th { background: #e4e4e4; text-align: center; border-color: #b0b0b0; padding: 0; }
.grid thead th { height: 33px; padding-bottom: 2px; border-bottom-color: #999; border-right-color: #c4c4c4; }
.grid thead th:last-child { padding-left: 16px; }
.grid .n { text-align: right; }
.grid .s { background: #e5eaf7; }
.all { display: block; width: 26px; height: 28px; margin-left: 18px; background: linear-gradient(to bottom right, transparent 50%, #b0b0b0 50%); }
.range { position: absolute; left: 336px; top: 83px; width: 146px; height: 116px; border: 2px solid #4a5db5; }
.range i { position: absolute; width: 5px; height: 5px; background: #4a5db5; outline: 1px solid #fff; }
.range i:nth-child(odd) { left: -3px; }
.range i:nth-child(even) { right: -3px; }
.range i:nth-child(-n+2) { top: -3px; }
.range i:nth-child(n+3) { bottom: -3px; }

.chart { position: absolute; left: 418px; top: 207px; width: 867px; height: 547px; background: #fff; border: 2px solid #a0a0a0; }
.h { position: absolute; width: 11px; height: 11px; border: 2px solid #8f8f8f; border-radius: 50%; background: #fff; }
.tl, .ml, .bl { left: -6px; }
.tr, .mr, .br { right: -6px; }
.tl, .tr { top: -6px; }
.bl, .bm, .br { bottom: -6px; }
.ml, .mr { top: 266px; }
.bm { left: 426px; }
.legend { position: absolute; left: 0; right: 0; bottom: 21px; display: flex; justify-content: center; gap: 12px; font-size: 20px; line-height: 28px; color: #595959; padding-left: 10px; }
.legend li { display: flex; align-items: center; gap: 8px; }
.legend li::before { content: ""; width: 9px; height: 9px; background: currentColor; }
.k1::before { background: #4a5db5 !important; }
.k2::before { background: #d6722f !important; }
.k3::before { background: #a0a0a0 !important; }
.k4::before { background: #ecc11a !important; }
.k5::before { background: #6a90c4 !important; }
.chart-tools { position: absolute; left: 878px; top: -2px; display: flex; flex-direction: column; gap: 11px; }
.chart-tools button { width: 29px; height: 29px; background: #fff; border: 1px solid #b8b8b8; display: grid; place-items: center; }

.vscroll { display: flex; flex-direction: column; margin: 13px 4px 0 3px; }
.vscroll button, .hscroll button { display: grid; place-items: center; background: #fff; border: 1px solid #b4b4b4; height: 16px; width: 100%; flex: none; }
.thumb { background: #fff; border: 1px solid #a6a6a6; }
.vscroll .thumb { flex: 768; }
.vscroll .track { flex: 40; background: #d4d4d4; }
.sheet-tabs { display: flex; align-items: center; height: 29px; flex: none; }
.prev, .next { border: 4px solid transparent; }
.prev { margin-left: 24px; border-right-color: #bbb; }
.next { margin-left: 24px; border-left-color: #bbb; }
.stab { height: 26px; margin-bottom: 3px; padding-top: 2px; color: #555; }
.first { margin-left: 36px; width: 76px; border-left: 1px solid #aaa; }
.current { width: 76px; background: #fff; font-weight: 700; color: #217346; border-bottom: 2px solid #217346; border-right: 1px solid #aaa; }
.add { margin-left: 33px; height: 18px; }
.sheet-tabs .dots { margin-left: auto; margin-right: 15px; }
.hscroll { display: flex; width: 620px; height: 16px; margin-right: 20px; background: #d6d6d6; }
.hscroll button { width: 14px; }
.hscroll .t1 { flex: 50; }
.hscroll .thumb { flex: 488; }
.hscroll .t2 { flex: 54; }

/* Aufgabenbereich */
.pane { display: flex; flex-direction: column; min-height: 0; padding: 23px 10px 20px 12px; border-left: 1px solid #c2c2c2; position: relative; }
.pane-head { display: flex; align-items: center; height: 28px; }
.pane-head h2 { font-size: 19px; line-height: 30px; height: 28px; color: #3c7d58; flex: 1; white-space: nowrap; }
.pane-head .caret { margin-right: 31px; }
.pane-head button { margin-right: 4px; }
.pane-sub { align-self: flex-start; margin: 12px 0 1px 5px; font-weight: 700; font-size: 11px; height: 18px; }
.pane-sub .caret { margin-left: 3px; }
.pane-icons { display: flex; gap: 16px; height: 56px; padding: 12px 0 0 6px; border-bottom: 1px solid #c0c0c0; }
.green { color: #217346; }
.notch { position: absolute; left: 22px; top: 130px; }
.pane-body { flex: 1; min-height: 0; display: flex; overflow: hidden; margin-top: 5px; padding-right: 1px; }
.fields { flex: 1; padding-right: 5px; font-size: 11px; color: #333; }
.fields h3 { height: 24px; line-height: 24px; font-size: 11px; font-weight: 700; color: #217346; padding-left: 22px; position: relative; }
.fields h3::before { content: ""; position: absolute; left: 8px; top: 7px; width: 7px; height: 7px; background: linear-gradient(to bottom right, transparent 50%, #333 50%); }
.radios { padding: 7px 0 0 23px; }
.radios label { display: flex; align-items: center; gap: 5px; height: 23px; }
.radios .chk { height: 28px; }
input[type="radio"], input[type="checkbox"] { appearance: none; width: 13px; height: 13px; flex: none; border: 1px solid #aaa; background: #fff; }
input[type="radio"] { width: 12px; height: 12px; border-radius: 50%; }
input[type="radio"]:checked { background: radial-gradient(circle, #555 0 2px, #fff 4px); }
input[type="checkbox"]:checked { background: #fff url("data:image/svg+xml,%3Csvg xmlns='http://www.w3.org/2000/svg' viewBox='0 0 11 11'%3E%3Cpath d='M2 5l3 4 5-7' fill='none' stroke='%23444' stroke-width='1.5'/%3E%3C/svg%3E") center / 11px no-repeat; }
.solo { margin: 12px 0 16px; }
.stack { display: flex; flex-direction: column; gap: 7px; margin-top: 13px; }
.field { display: flex; align-items: center; justify-content: space-between; padding-left: 32px; }
.pick { display: flex; align-items: center; justify-content: space-between; width: 44px; height: 27px; padding: 0 5px 0 8px; background: #fff; border: 1px solid #b0b0b0; }
.off { color: #9a9a9a; }
.off .pick { border-color: #eee; }
.off .caret { opacity: .6; }
.spin { position: relative; width: 73px; }
.spin input { width: 100%; height: 22px; border: 1px solid #b0b0b0; background: #fff; padding: 0 0 0 6px; color: #444; display: block; }
.spin::before, .spin::after { content: ""; position: absolute; right: 6px; border: 2px solid transparent; }
.spin::before { top: 3px; border-bottom: 3px solid #666; }
.spin::after { bottom: 3px; border-top: 3px solid #666; }
.field input[type="range"] { appearance: none; width: 54px; height: 12px; margin: 0; background: linear-gradient(#aaa, #aaa) center / 100% 1px no-repeat; }
.field input[type="range"]::-webkit-slider-thumb { appearance: none; width: 2px; height: 10px; background: #666; }
.sel { position: relative; }
.sel select { appearance: none; width: 100%; height: 23px; border: 1px solid #b0b0b0; border-radius: 0; background: #fff; padding: 0 5px; display: block; }
.sel::after { content: ""; position: absolute; right: 5px; top: 9px; border: 3px solid transparent; border-top: 4px solid #666; }
.w90 { width: 89px; }
.w102 { width: 102px; }
.slim { width: 14px; margin: 2px 0 1px; }
.slim .thumb { flex: 654; }
.slim .track { flex: 29; }

/* Statusleiste */
.status { display: flex; align-items: center; height: 25px; padding: 0 4px 0 8px; flex: none; background: #f2f2f2; border-top: 1px solid #c4c4c4; border-bottom: 2px solid #1a1a1a; font-size: 11px; }
.views { display: flex; height: 100%; margin-left: auto; }
.views button { width: 38px; display: grid; place-items: center; }
.views .on { background: #c3c3c3; }
.zoom-btn { width: 14px; font-size: 14px; font-weight: 700; line-height: 16px; color: #555; }
.zoom-range { appearance: none; width: 100px; height: 14px; background: linear-gradient(#aaa, #aaa) center / 100% 1px no-repeat, linear-gradient(#aaa, #aaa) center / 1px 5px no-repeat; }
.zoom-range::-webkit-slider-thumb { appearance: none; width: 5px; height: 12px; background: #666; }
.pct { margin-left: 8px; }

/* Dialog */
.dialog { position: absolute; left: 645px; top: 205px; width: 635px; background: #efefef; border: 1px solid #5583bd; box-shadow: 0 3px 14px rgba(0, 0, 0, .4); font-size: 11px; color: #222; }
.title { display: flex; align-items: center; height: 33px; background: #fff; padding: 0 17px 1px 7px; }
.title span { flex: 1; }
.title button + button { margin-left: 36px; height: 12px; line-height: 12px; }
.title button { font-weight: 600; font-size: 12px; }
.dtabs { display: flex; align-items: flex-end; margin: 7px 7px 0; height: 22px; }
.dtabs button { height: 20px; padding: 0 4px; border: 1px solid #dcdcdc; border-bottom: 0; font-weight: 500; }
.dtabs .active { height: 22px; padding: 0 8px; background: #fff; }
.page { display: flex; margin: 0 8px 0 6px; background: #fff; border: 1px solid #dfdfdf; height: 534px; }
.types { display: flex; flex-direction: column; width: 143px; padding: 12px 0 39px 12px; }
.types button { flex: 1; display: flex; align-items: center; gap: 13px; padding-left: 3px; color: #666; white-space: nowrap; }
.types svg { width: 16px; height: 16px; flex: none; fill: none; stroke: #777; }
.types .f { fill: #b4b4b4; }
.types button:nth-child(-n+2) svg { stroke: none; }
.types .on { background: #bdbdbd; color: #444; }
.config { position: relative; flex: 1; padding: 12px 11px 13px 24px; display: flex; flex-direction: column; }
.config::before { content: ""; position: absolute; left: 12px; top: 15px; bottom: 15px; border-left: 1px solid #c0c0c0; }
.variants { display: flex; height: 66px; border-bottom: 1px solid #b4b4b4; }
.variants button { width: 56px; height: 59px; display: grid; place-items: center; }
.variants svg { width: 40px; height: 36px; overflow: visible; }
.variants .on { background: #bdbdbd; }
.config h2 { font-size: 15px; line-height: 34px; height: 33px; }
.preview { height: 240px; width: 380px; border-top: 1px solid #e2e2e2; border-left: 1px solid #e2e2e2; padding: 23px 2px 0 0; display: flex; flex-direction: column; align-items: center; }
.preview ul { display: flex; gap: 10px; margin-top: 26px; padding-left: 4px; font-size: 8px; line-height: 16px; color: #555; }
.preview li { display: flex; align-items: center; gap: 3px; }
.preview li::before { content: ""; width: 4px; height: 4px; }
.config p { height: 19px; line-height: 19px; white-space: nowrap; }
.series { flex: 1; border: 1px solid #8a8a8a; }
.series table { width: 100%; table-layout: fixed; border-collapse: collapse; }
.s1 { width: 154px; }
.s2 { width: 197px; }
.series th { height: 16px; padding: 0 0 0 7px; text-align: left; font-weight: 400; line-height: 16px; border-left: 1px solid #e4e4e4; white-space: nowrap; }
.series th:first-child { border-left: 0; }
.series td { height: 38px; padding: 0 0 0 24px; }
.series td:first-child { padding-left: 11px; }
.series td:last-child { padding: 0; text-align: center; }
.series td { vertical-align: middle; }
.series td input { vertical-align: middle; border-color: #666; }
.focus { outline: 1px dotted #222; }
.hot { background: #dbdade; }
.sw { display: inline-block; width: 6px; height: 12px; margin-right: 10px; vertical-align: middle; }
.o { background: #d6722f; }
.b { background: #4a5db5; }
.dsel { position: relative; display: flex; width: 154px; height: 27px; }
.dsel select { appearance: none; flex: 1; border: 1px solid #aaa; border-radius: 0; padding: 0 4px; background: linear-gradient(#a4a4a4, #a4a4a4) 126px 0 / 1px 100% no-repeat, linear-gradient(90deg, #fff 126px, #dedede 126px); }
.dsel svg { position: absolute; right: 9px; top: 10px; pointer-events: none; }
.actions { display: flex; justify-content: flex-end; gap: 11px; padding: 5px 7px 8px; }
.actions button { width: 74px; height: 22px; background: #e0e0e0; border: 1px solid #b4b4b4; }
.actions .ok { border: 2px solid #3f68bd; }
.grip { position: absolute; right: 2px; bottom: 2px; }
.cursor { position: absolute; left: 357px; top: 243px; }
```
